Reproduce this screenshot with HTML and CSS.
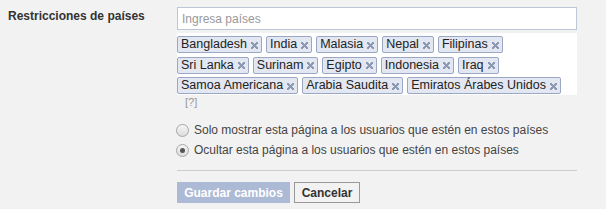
FILE: index.html
```html
<!DOCTYPE html>
<html lang="es">
<head>
    <meta charset="UTF-8">
    <title>Restricciones de países</title>
    <link rel="stylesheet" href="styles.css">
</head>
<body>
    <div class="form-row">
        <div class="form-label">Restricciones de países</div>
        <div class="form-field">
            <input type="text" class="country-input" placeholder="Ingresa países">
            <ul class="token-list">
                <li class="token">Bangladesh<span class="token-x"></span></li>
                <li class="token">India<span class="token-x"></span></li>
                <li class="token">Malasia<span class="token-x"></span></li>
                <li class="token">Nepal<span class="token-x"></span></li>
                <li class="token">Filipinas<span class="token-x"></span></li>
                <li class="token">Sri Lanka<span class="token-x"></span></li>
                <li class="token">Surinam<span class="token-x"></span></li>
                <li class="token">Egipto<span class="token-x"></span></li>
                <li class="token">Indonesia<span class="token-x"></span></li>
                <li class="token">Iraq<span class="token-x"></span></li>
                <li class="token">Samoa Americana<span class="token-x"></span></li>
                <li class="token">Arabia Saudita<span class="token-x"></span></li>
                <li class="token">Emiratos Árabes Unidos<span class="token-x"></span></li>
            </ul>
            <div class="help">[?]</div>

            <div class="radio-group">
                <label class="radio-item"><span class="radio"></span>Solo mostrar esta página a los usuarios que estén en estos países</label>
                <label class="radio-item"><span class="radio checked"></span>Ocultar esta página a los usuarios que estén en estos países</label>
            </div>

            <div class="divider"></div>

            <div class="buttons">
                <button class="btn btn-save">Guardar cambios</button>
                <button class="btn btn-cancel">Cancelar</button>
            </div>
        </div>
    </div>
</body>
</html>
```

FILE: styles.css
```css
body {
    margin: 0;
    padding: 7px 8px;
    background: #f2f2f2;
    font-family: 'Liberation Sans', Arial, sans-serif;
    font-size: 12px;
    color: #333;
}

.form-row {
    display: flex;
}

.form-label {
    width: 169px;
    font-weight: bold;
    color: #333;
    line-height: 16px;
    padding-top: 1px;
}

.form-field {
    width: 400px;
    display: flex;
    flex-direction: column;
}

.country-input {
    box-sizing: border-box;
    width: 400px;
    height: 23px;
    margin: 0;
    border: 1px solid #bdc7d8;
    padding: 0 4px;
    font-family: inherit;
    font-size: 12px;
    background: #fff;
    outline: none;
}

.country-input::placeholder {
    color: #999;
}

.token-list {
    list-style: none;
    margin: 3px 0 0;
    padding: 3px 6px 1px 0;
    background: #fff;
    display: flex;
    flex-wrap: wrap;
    column-gap: 4px;
    row-gap: 3.5px;
}

.token {
    box-sizing: border-box;
    height: 17px;
    line-height: 15px;
    padding: 0 3px 0 3px;
    border: 1px solid #9aa7c5;
    border-radius: 2px;
    background: #e2e7f1;
    color: #222;
    font-size: 12.5px;
    display: flex;
    align-items: center;
}

.token-x {
    width: 7px;
    height: 7px;
    margin-left: 4px;
    margin-top: 1px;
    background:
        linear-gradient(45deg, transparent 40%, #8d98b3 40%, #8d98b3 60%, transparent 60%),
        linear-gradient(-45deg, transparent 40%, #8d98b3 40%, #8d98b3 60%, transparent 60%);
}

.help {
    color: #999;
    font-size: 11px;
    line-height: 13px;
    padding: 1px 0 0 8px;
}

.radio-group {
    margin-top: 14px;
    display: flex;
    flex-direction: column;
    gap: 5px;
}

.radio-item {
    display: flex;
    align-items: center;
    line-height: 15px;
    color: #444;
}

.radio {
    box-sizing: border-box;
    width: 13px;
    height: 13px;
    margin-left: -1px;
    margin-right: 5px;
    border: 1px solid #a6a6a6;
    border-radius: 50%;
    background: linear-gradient(#f6f6f6, #dcdcdc);
    display: flex;
    align-items: center;
    justify-content: center;
}

.radio.checked::after {
    content: '';
    width: 5px;
    height: 5px;
    border-radius: 50%;
    background: #555;
}

.divider {
    height: 1px;
    background: #ccc;
    margin-top: 12px;
}

.buttons {
    display: flex;
    gap: 4px;
    margin-top: 11px;
}

.btn {
    box-sizing: border-box;
    height: 21px;
    margin: 0;
    font-family: inherit;
    font-size: 12px;
    cursor: pointer;
}

.btn-save {
    width: 113px;
    background: #adbad6;
    border: 1px solid #adbad6;
    color: #fff;
    font-weight: bold;
}

.btn-cancel {
    width: 66px;
    background: #f2f2f2;
    border: 1px solid #999;
    color: #333;
    font-weight: bold;
}
```
